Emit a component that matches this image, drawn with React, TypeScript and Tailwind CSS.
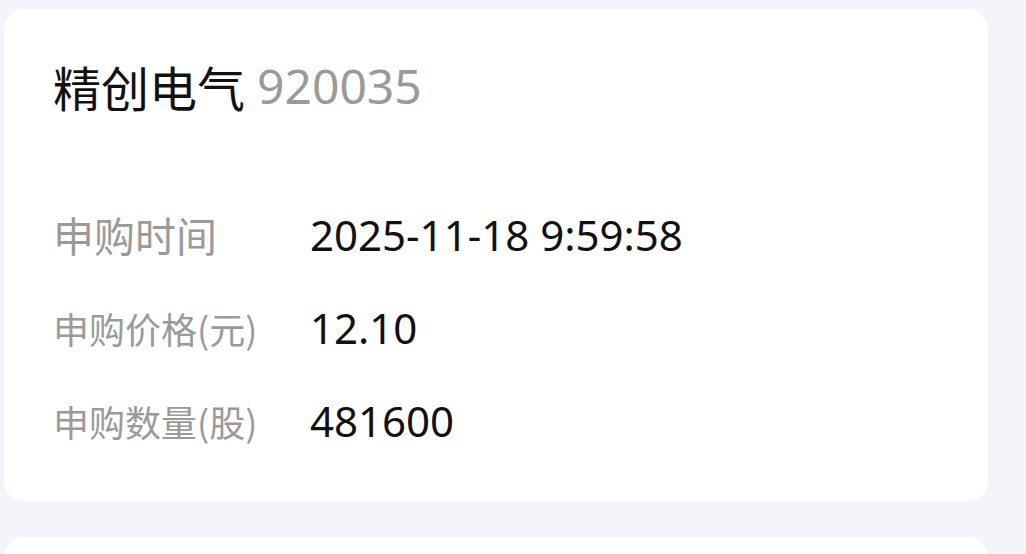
import React from 'react';

const rows: { label: string; value: string; small?: boolean }[] = [
  { label: '申购时间', value: '2025-11-18 9:59:58' },
  { label: '申购价格(元)', value: '12.10', small: true },
  { label: '申购数量(股)', value: '481600', small: true },
];

export default function App() {
  return (
    <div
      className="h-[554px] bg-[#f4f5fa] pt-[9px] pl-[4px] pr-[38px] flex flex-col gap-[36px] overflow-hidden"
      style={{ fontFamily: '"Noto Sans", "Noto Sans CJK SC", sans-serif' }}
    >
      {/* Subscription card */}
      <div className="bg-white rounded-[20px] pt-[27px] pb-[34px] pl-[49px] shrink-0">
        <div className="h-[100px] flex items-center gap-[12px] text-[48px] leading-none">
          <span className="text-[#111111]" style={{ fontFamily: '"Noto Sans CJK SC", sans-serif' }}>精创电气</span>
          <span className="text-[#9a9a9a]">920035</span>
        </div>

        <div className="mt-[52px] flex flex-col">
          {rows.map((r) => (
            <div key={r.label} className="h-[93px] flex items-center">
              <span
                className={`w-[257px] text-[#9a9a9a] leading-none ${r.small ? 'text-[36px]' : 'text-[41px]'}`}
                style={{ fontFamily: '"Noto Sans CJK SC", sans-serif' }}
              >
                {r.label}
              </span>
              <span className="text-[42px] text-[#111111] leading-none">{r.value}</span>
            </div>
          ))}
        </div>
      </div>

      {/* Next card, cut off */}
      <div className="bg-white rounded-[20px] h-[200px] shrink-0" />
    </div>
  );
}
